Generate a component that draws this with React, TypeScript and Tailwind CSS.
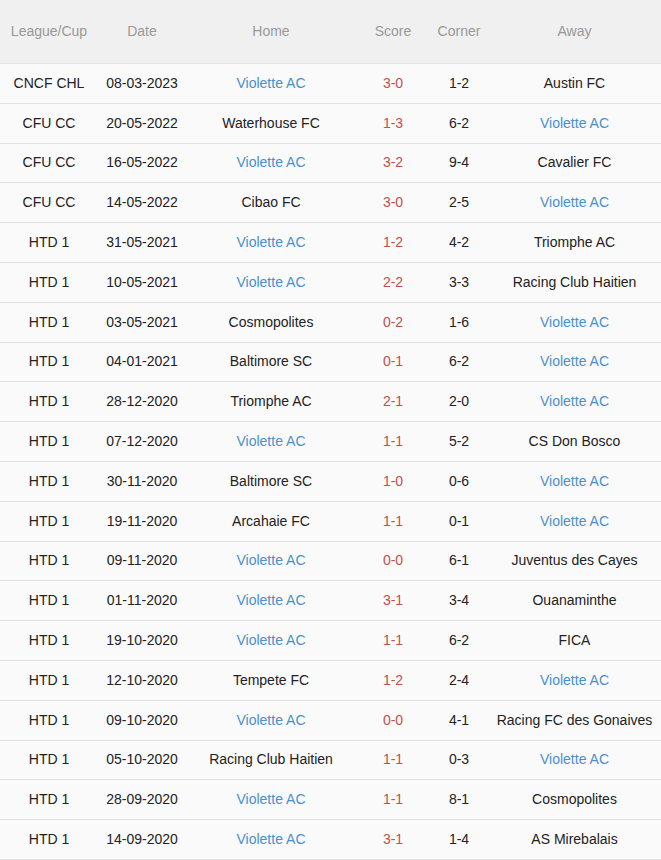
import React from "react";

type Row = [string, string, string, string, string, string];

const rows: Row[] = [
  ["CNCF CHL", "08-03-2023", "Violette AC", "3-0", "1-2", "Austin FC"],
  ["CFU CC", "20-05-2022", "Waterhouse FC", "1-3", "6-2", "Violette AC"],
  ["CFU CC", "16-05-2022", "Violette AC", "3-2", "9-4", "Cavalier FC"],
  ["CFU CC", "14-05-2022", "Cibao FC", "3-0", "2-5", "Violette AC"],
  ["HTD 1", "31-05-2021", "Violette AC", "1-2", "4-2", "Triomphe AC"],
  ["HTD 1", "10-05-2021", "Violette AC", "2-2", "3-3", "Racing Club Haitien"],
  ["HTD 1", "03-05-2021", "Cosmopolites", "0-2", "1-6", "Violette AC"],
  ["HTD 1", "04-01-2021", "Baltimore SC", "0-1", "6-2", "Violette AC"],
  ["HTD 1", "28-12-2020", "Triomphe AC", "2-1", "2-0", "Violette AC"],
  ["HTD 1", "07-12-2020", "Violette AC", "1-1", "5-2", "CS Don Bosco"],
  ["HTD 1", "30-11-2020", "Baltimore SC", "1-0", "0-6", "Violette AC"],
  ["HTD 1", "19-11-2020", "Arcahaie FC", "1-1", "0-1", "Violette AC"],
  ["HTD 1", "09-11-2020", "Violette AC", "0-0", "6-1", "Juventus des Cayes"],
  ["HTD 1", "01-11-2020", "Violette AC", "3-1", "3-4", "Ouanaminthe"],
  ["HTD 1", "19-10-2020", "Violette AC", "1-1", "6-2", "FICA"],
  ["HTD 1", "12-10-2020", "Tempete FC", "1-2", "2-4", "Violette AC"],
  ["HTD 1", "09-10-2020", "Violette AC", "0-0", "4-1", "Racing FC des Gonaives"],
  ["HTD 1", "05-10-2020", "Racing Club Haitien", "1-1", "0-3", "Violette AC"],
  ["HTD 1", "28-09-2020", "Violette AC", "1-1", "8-1", "Cosmopolites"],
  ["HTD 1", "14-09-2020", "Violette AC", "3-1", "1-4", "AS Mirebalais"],
];

const team = (name: string) =>
  name === "Violette AC" ? "text-[#4a8fcc]" : "text-[#222]";

export default function App() {
  return (
    <div className="w-[661px] bg-white text-[14px] font-['Liberation_Sans',Arial,sans-serif]">
      <div className="flex h-[64px] items-center border-b border-[#e3e3e3] bg-[#f0f0f0] text-[#999]">
        <div className="w-[98px] text-center">League/Cup</div>
        <div className="w-[88px] text-center">Date</div>
        <div className="w-[170px] text-center">Home</div>
        <div className="w-[74px] text-center">Score</div>
        <div className="w-[58px] text-center">Corner</div>
        <div className="flex-1 text-center">Away</div>
      </div>
      {rows.map((r, i) => (
        <div
          key={i}
          className="flex h-[39.8px] items-center border-b border-[#e3e3e3] bg-[#fafafa] text-[#222]"
        >
          <div className="w-[98px] text-center">{r[0]}</div>
          <div className="w-[88px] text-center">{r[1]}</div>
          <div className={`w-[170px] text-center ${team(r[2])}`}>{r[2]}</div>
          <div className="w-[74px] text-center text-[#c0504d]">{r[3]}</div>
          <div className="w-[58px] text-center">{r[4]}</div>
          <div className={`flex-1 text-center ${team(r[5])}`}>{r[5]}</div>
        </div>
      ))}
    </div>
  );
}
